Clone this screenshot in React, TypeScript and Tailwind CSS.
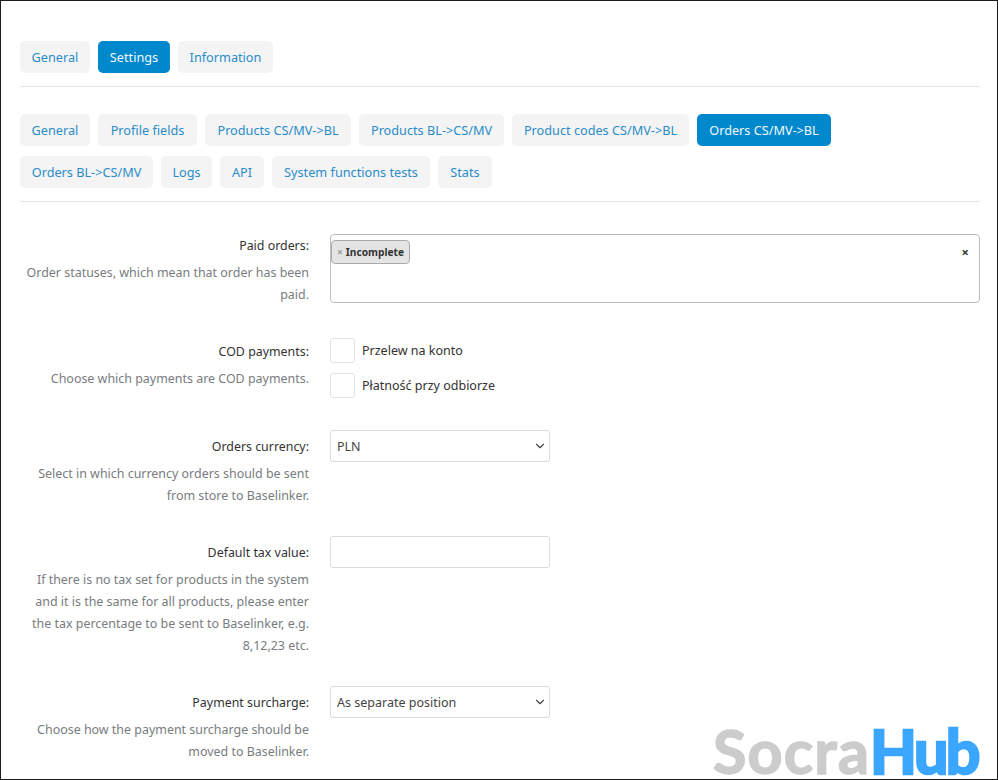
import { ChevronDown } from "lucide-react";

const topTabs = [
  { label: "General", width: "w-[70px]" },
  { label: "Settings", width: "w-[72px]", active: true },
  { label: "Information", width: "w-[95px]" },
];

const subTabs = [
  { label: "General", width: "w-[70px]" },
  { label: "Profile fields", width: "w-[99px]" },
  { label: "Products CS/MV->BL", width: "w-[146px]" },
  { label: "Products BL->CS/MV", width: "w-[145px]" },
  { label: "Product codes CS/MV->BL", width: "w-[177px]" },
  { label: "Orders CS/MV->BL", width: "w-[134px]", active: true },
  { label: "Orders BL->CS/MV", width: "w-[133px]" },
  { label: "Logs", width: "w-[51px]" },
  { label: "API", width: "w-[44px]" },
  { label: "System functions tests", width: "w-[158px]" },
  { label: "Stats", width: "w-[54px]" },
];

interface TabItem {
  label: string;
  width: string;
  active?: boolean;
}

function Tabs({ items }: { items: TabItem[] }) {
  return (
    <div className="flex max-w-[900px] flex-wrap gap-x-2 gap-y-[10px]">
      {items.map((tab) => (
        <a
          key={tab.label}
          className={`flex h-8 items-center justify-center whitespace-nowrap rounded-[5px] pt-[2px] text-[12.7px] ${tab.width} ${
            tab.active ? "bg-[#0088cc] text-[#f2f8fc]" : "bg-[#f4f4f5] text-[#2a8cc8]"
          }`}
        >
          {tab.label}
        </a>
      ))}
    </div>
  );
}

function Row({
  label,
  help,
  children,
}: {
  label: string;
  help: string[];
  children: React.ReactNode;
}) {
  return (
    <div className="flex gap-[21px]">
      <div className="-mb-[1px] w-[289px] shrink-0 pt-[6px] text-right text-[12.4px] leading-[22px]">
        <div className="mb-[5px] text-[#333]">{label}</div>
        {help.map((line) => (
          <div key={line} className="whitespace-nowrap text-[12.45px] text-[#787c80]">
            {line}
          </div>
        ))}
      </div>
      {children}
    </div>
  );
}

function SelectBox({ value }: { value: string }) {
  return (
    <div className="relative h-8 w-[220px]">
      <select
        defaultValue={value}
        className="h-8 w-full appearance-none rounded-[3px] border border-[#dcdcdc] bg-white px-[6px] pt-[2px] text-[12.5px] text-[#444] outline-none"
      >
        <option>{value}</option>
      </select>
      <ChevronDown className="absolute right-[3px] top-[9px] h-[14px] w-[14px] text-[#444]" strokeWidth={2} />
    </div>
  );
}

function CheckOption({ label }: { label: string }) {
  return (
    <label className="flex h-[25px] items-center gap-[7px] text-[12.5px] text-[#333]">
      <span className="h-[25px] w-[25px] rounded-[3px] border border-[#e2e2e2] bg-white" />
      <span className="mt-[2px]">{label}</span>
    </label>
  );
}

export default function App() {
  return (
    <div className="relative h-[780px] w-[998px] overflow-hidden border border-[#1c1c1c] bg-white pl-[19px] pr-[17px] pt-10 font-['Noto_Sans',sans-serif]">
      <Tabs items={topTabs} />
      <hr className="mb-[27px] mt-[13px] border-[#e6e6e6]" />
      <Tabs items={subTabs} />
      <hr className="mb-[27px] mt-[13px] border-[#e6e6e6]" />

      <div className="flex flex-col gap-[30px]">
        <Row label="Paid orders:" help={["Order statuses, which mean that order has been", "paid."]}>
          <div className="relative mt-[5px] h-[69px] w-[650px] rounded-[4px] border border-[#bdbdbd] bg-white">
            <span className="ml-0 mt-[5px] inline-flex h-6 w-[79px] items-center gap-[3px] whitespace-nowrap rounded-[4px] border border-[#aaa] bg-[#e4e4e4] pl-[5px] pt-[2px] text-[10.2px] font-bold text-[#333]">
              <span className="font-bold text-[#999]">×</span>
              Incomplete
            </span>
            <span className="absolute right-[10px] top-[6px] text-[13px] font-bold leading-[22px] text-[#333]">×</span>
          </div>
        </Row>

        <Row label="COD payments:" help={["Choose which payments are COD payments."]}>
          <div className="flex flex-col gap-[10px] pb-[2px] pt-[3px]">
            <CheckOption label="Przelew na konto" />
            <CheckOption label="Płatność przy odbiorze" />
          </div>
        </Row>

        <Row label="Orders currency:" help={["Select in which currency orders should be sent", "from store to Baselinker."]}>
          <SelectBox value="PLN" />
        </Row>

        <Row
          label="Default tax value:"
          help={[
            "If there is no tax set for products in the system",
            "and it is the same for all products, please enter",
            "the tax percentage to be sent to Baselinker, e.g.",
            "8,12,23 etc.",
          ]}
        >
          <input className="h-8 w-[220px] rounded-[3px] border border-[#dcdcdc] bg-white outline-none" />
        </Row>

        <Row label="Payment surcharge:" help={["Choose how the payment surcharge should be", "moved to Baselinker."]}>
          <SelectBox value="As separate position" />
        </Row>
      </div>

      {/* watermark over the page */}
      <div className="absolute bottom-[2px] right-[17px] whitespace-nowrap font-['Lato',sans-serif] text-[61px] font-bold leading-[52px]">
        <span className="tracking-[1.2px] text-[#cccccc] [-webkit-text-stroke:1.5px_#cccccc]">Socra</span>
        <span className="tracking-[-2.5px] pr-[2px] text-[#3ba6ff] [-webkit-text-stroke:2.5px_#3ba6ff]">Hub</span>
      </div>
    </div>
  );
}
